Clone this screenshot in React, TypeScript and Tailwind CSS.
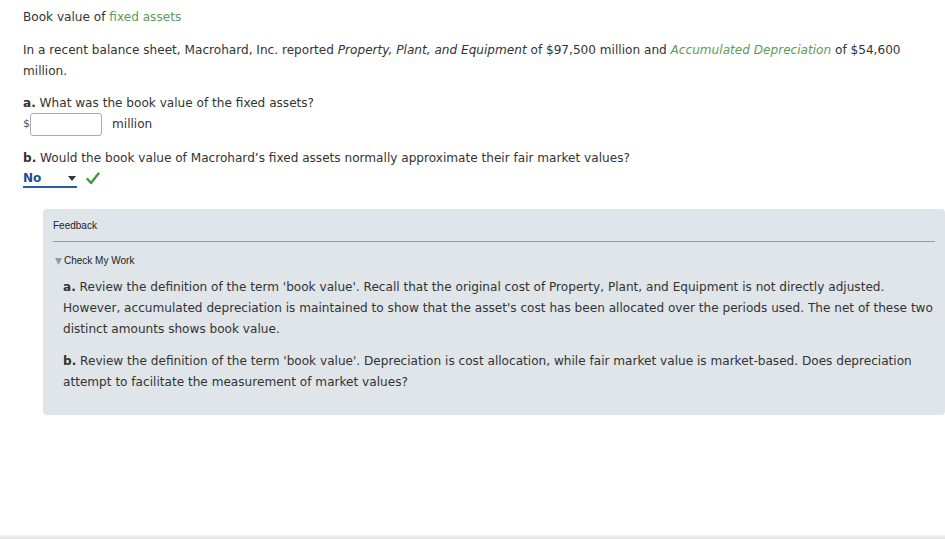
import React from 'react';

const verdana = { fontFamily: 'Verdana, "DejaVu Sans", sans-serif' };
const arial = { fontFamily: '"Liberation Sans", Arial, sans-serif' };

function CheckIcon() {
  return (
    <svg width="14" height="13" viewBox="0 0 14 13" className="ml-[9px] mt-[1px]">
      <path d="M1.5 7 L5 11 L12.5 1.5" fill="none" stroke="#3f9c35" strokeWidth="2.4" strokeLinecap="round" strokeLinejoin="round" />
    </svg>
  );
}

export default function App() {
  return (
    <div className="flex h-[539px] w-[945px] flex-col overflow-hidden bg-white text-[12.1px] text-[#333]" style={verdana}>
      <div className="flex-1 pl-[23px] pt-[9px]">
        <h1 className="leading-[17px]">
          Book value of <span className="text-[#5d9b56]">fixed assets</span>
        </h1>

        <p className="mt-[14px] pr-[30px] leading-[21px]">
          In a recent balance sheet, Macrohard, Inc. reported <i>Property, Plant, and Equipment</i> of $97,500 million and{' '}
          <i className="text-[#5d9b56]">Accumulated Depreciation</i> of $54,600 million.
        </p>

        <div className="mt-[13px]">
          <p className="leading-[17px]">
            <b>a.</b> What was the book value of the fixed assets?
          </p>
          <div className="mt-[1px] flex items-center">
            <span className="text-[11px] text-[#555]">$</span>
            <div className="h-[23px] w-[72px] rounded-[3px] border border-[#aaa] bg-white" />
            <span className="ml-[10px]">million</span>
          </div>
        </div>

        <div className="mt-[14px]">
          <p className="leading-[17px]">
            <b>b.</b> Would the book value of Macrohard’s fixed assets normally approximate their fair market values?
          </p>
          <div className="mt-[4px] flex items-start">
            <div className="flex h-[17px] w-[54px] items-center justify-between border-b-2 border-[#1f5fa8] leading-[15px]">
              <b className="text-[#1f4e8c]">No</b>
              <svg width="8" height="5" viewBox="0 0 8 5" className="mr-[1px]">
                <path d="M0 0 L8 0 L4 5 Z" fill="#333" />
              </svg>
            </div>
            <CheckIcon />
          </div>
        </div>

        <div className="mt-[21px] ml-[20px] rounded-[4px] bg-[#dfe5e9] pb-[22px] pl-[10px] pt-[10px]">
          <div className="mr-[10px] border-b border-[#9a9a9a] pb-[9px] pt-[1px] text-[10px] leading-[12px] text-[#222]" style={arial}>
            Feedback
          </div>
          <div className="mt-[13px] flex items-center text-[10px] leading-[12px] text-[#222]" style={arial}>
            <svg width="8" height="8" viewBox="0 0 8 8" className="ml-[2px] mr-[1px]">
              <path d="M0 1 L7 1 L3.5 8 Z" fill="#999" />
            </svg>
            Check My Work
          </div>
          <div className="mt-[10px] pl-[10px] leading-[21px]">
            <p>
              <b>a.</b> Review the definition of the term 'book value'. Recall that the original cost of Property, Plant, and Equipment is not directly adjusted. However, accumulated depreciation is maintained to show that the asset's cost has been allocated over the periods used. The net of these two distinct amounts shows book value.
            </p>
            <p className="mt-[11px]">
              <b>b.</b> Review the definition of the term 'book value'. Depreciation is cost allocation, while fair market value is market-based. Does depreciation attempt to facilitate the measurement of market values?
            </p>
          </div>
        </div>
      </div>
      <div className="h-[4px] bg-gradient-to-b from-[#f4f4f4] to-[#e2e2e2]" />
    </div>
  );
}
